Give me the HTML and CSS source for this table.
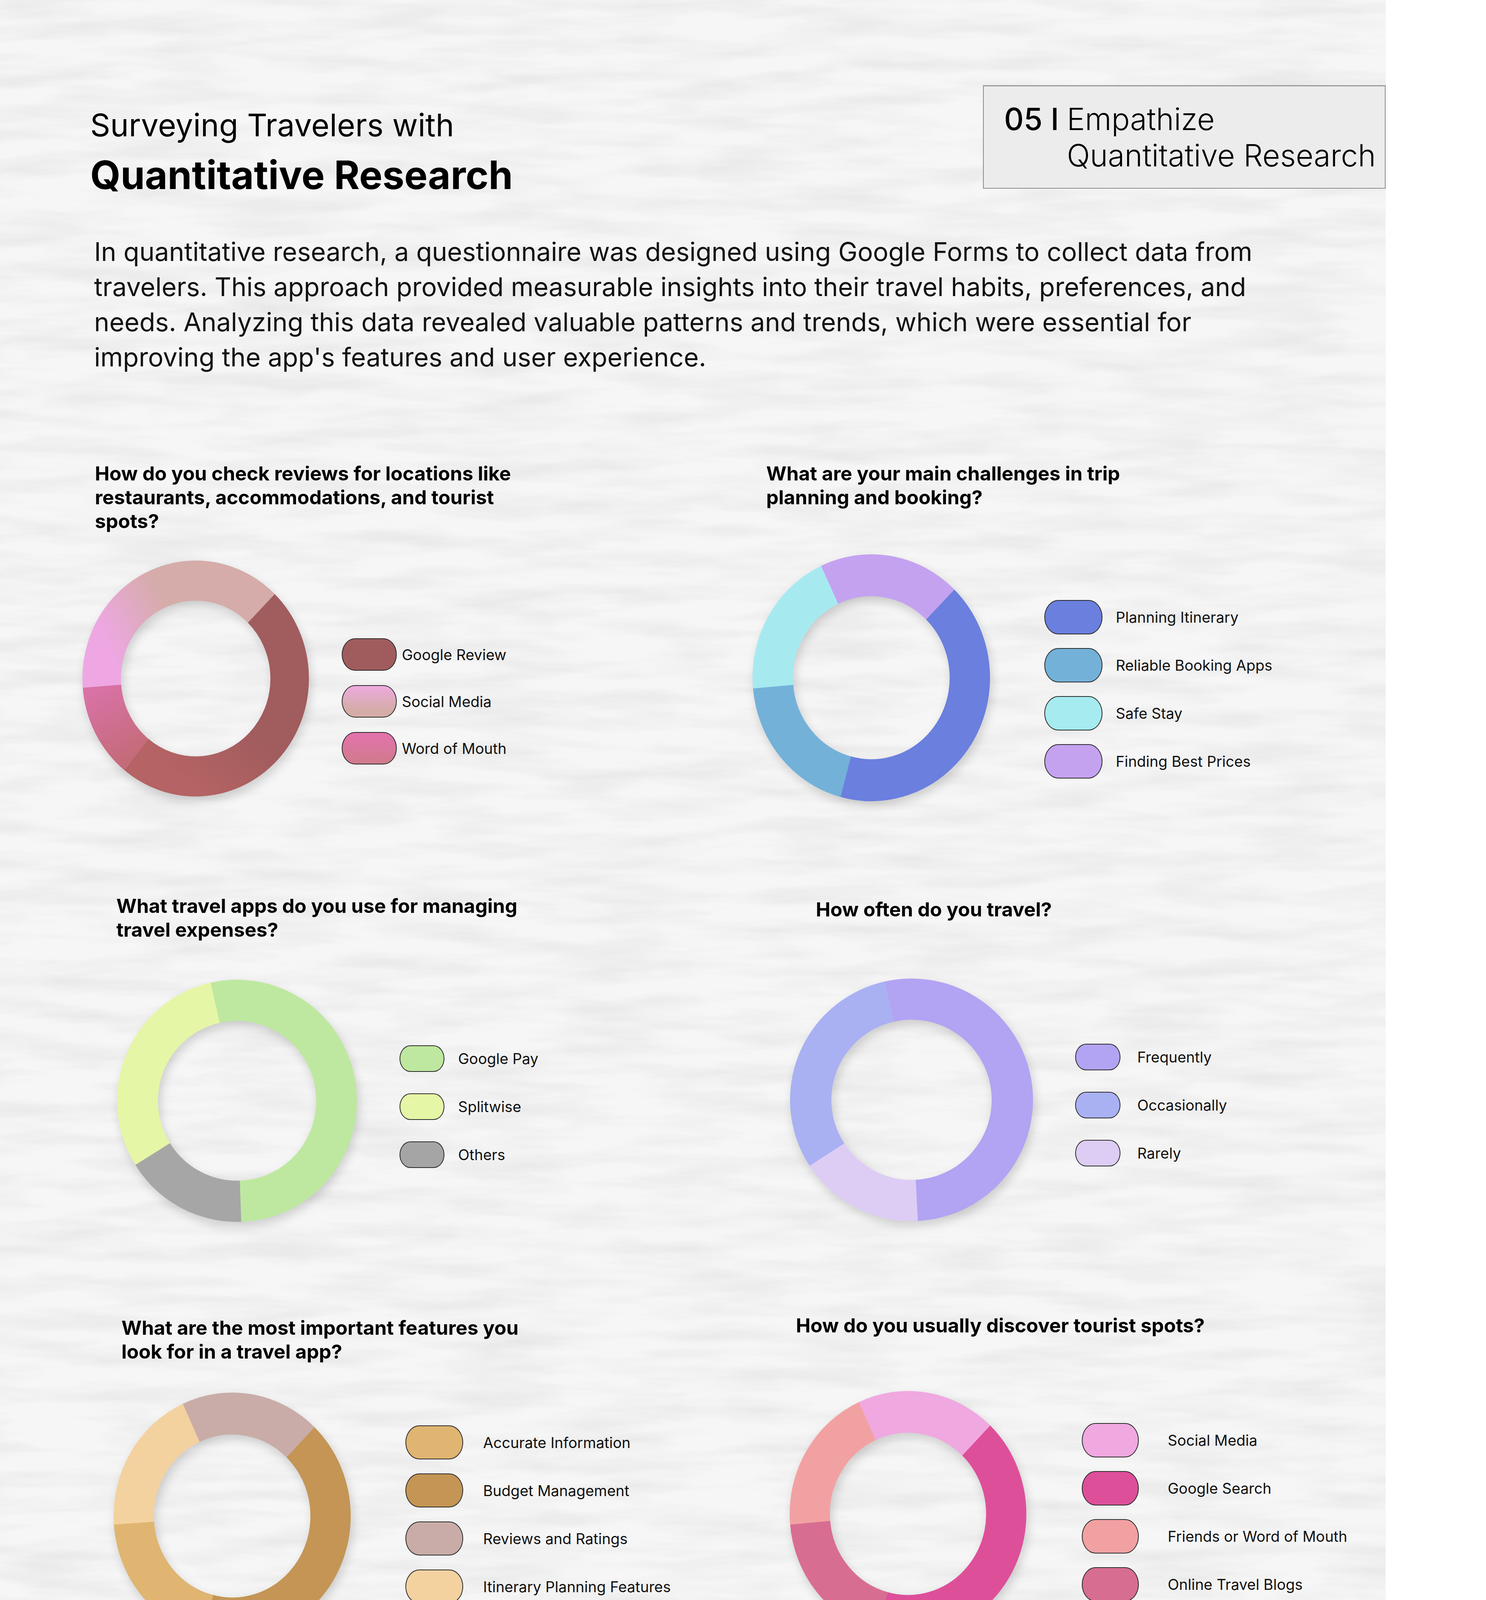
FILE: index.html
```html
<!DOCTYPE html>
<html lang="en">
<head>
<meta charset="utf-8">
<title>Surveying Travelers with Quantitative Research</title>
<link rel="stylesheet" href="styles.css">
</head>
<body>
<div class="page">
  <main class="paper">
    <svg class="grain" aria-hidden="true" xmlns="http://www.w3.org/2000/svg">
      <filter id="paperGrain" x="0" y="0" width="100%" height="100%">
        <feTurbulence type="fractalNoise" baseFrequency="0.0035 0.022" numOctaves="4" seed="11"/>
        <feColorMatrix type="matrix" values="0 0 0 0 0.6  0 0 0 0 0.6  0 0 0 0 0.6  0.6 0 0 0 -0.22"/>
      </filter>
      <rect width="100%" height="100%" filter="url(#paperGrain)"/>
    </svg>

    <div class="content">
      <header class="top">
        <h1 class="heading">
          <span class="kicker">Surveying Travelers with</span>
          <span class="title">Quantitative Research</span>
        </h1>
        <div class="tag">
          <span class="tag-num">05 I</span>
          <span class="tag-text">Empathize<br>Quantitative Research</span>
        </div>
      </header>

      <p class="intro">In quantitative research, a questionnaire was designed using Google Forms to collect data from<br>travelers. This approach provided measurable insights into their travel habits, preferences, and<br>needs. Analyzing this data revealed valuable patterns and trends, which were essential for<br>improving the app's features and user experience.</p>

      <div class="charts">
        <section class="chart c1">
          <h2 class="q">How do you check reviews for locations like<br>restaurants, accommodations, and tourist<br>spots?</h2>
          <div class="body">
            <svg class="donut" viewBox="0 0 200 200" preserveAspectRatio="none">
              <defs>
                <linearGradient id="gReview" x1="1" y1="0.5" x2="0" y2="0.54">
                  <stop offset="0.5" stop-color="#a15c5d"/>
                  <stop offset="0.92" stop-color="#b56364"/>
                </linearGradient>
                <linearGradient id="gMouth" x1="1" y1="0.5" x2="0.84" y2="0.86">
                  <stop offset="0" stop-color="#c46b79"/>
                  <stop offset="1" stop-color="#d972a6"/>
                </linearGradient>
                <linearGradient id="gSocial" x1="1" y1="0.5" x2="0.13" y2="0.83">
                  <stop offset="0.12" stop-color="#eea7e3"/>
                  <stop offset="0.52" stop-color="#d5aca9"/>
                </linearGradient>
              </defs>
              <circle class="seg" cx="100" cy="100" r="83" pathLength="100" stroke="url(#gReview)" stroke-dasharray="48.8 100" transform="rotate(-46 100 100)"/>
              <circle class="seg" cx="100" cy="100" r="83" pathLength="100" stroke="url(#gMouth)" stroke-dasharray="13.1 100" transform="rotate(129 100 100)"/>
              <circle class="seg" cx="100" cy="100" r="83" pathLength="100" stroke="url(#gSocial)" stroke-dasharray="38.6 100" transform="rotate(175.5 100 100)"/>
            </svg>
            <ul class="legend">
              <li><span class="sw k-review"></span>Google Review</li>
              <li><span class="sw k-social1"></span>Social Media</li>
              <li><span class="sw k-mouth1"></span>Word of Mouth</li>
            </ul>
          </div>
        </section>

        <section class="chart c2">
          <h2 class="q">What are your main challenges in trip<br>planning and booking?</h2>
          <div class="body">
            <svg class="donut" viewBox="0 0 200 200" preserveAspectRatio="none">
              <circle class="seg" cx="100" cy="100" r="83" pathLength="100" stroke="#6a7fde" stroke-dasharray="42.1 100" transform="rotate(-46 100 100)"/>
              <circle class="seg" cx="100" cy="100" r="83" pathLength="100" stroke="#73b1d9" stroke-dasharray="19.6 100" transform="rotate(105 100 100)"/>
              <circle class="seg" cx="100" cy="100" r="83" pathLength="100" stroke="#a6eaf0" stroke-dasharray="19.6 100" transform="rotate(175 100 100)"/>
              <circle class="seg" cx="100" cy="100" r="83" pathLength="100" stroke="#c4a2f0" stroke-dasharray="19.3 100" transform="rotate(245 100 100)"/>
            </svg>
            <ul class="legend">
              <li><span class="sw k-plan"></span>Planning Itinerary</li>
              <li><span class="sw k-booking"></span>Reliable Booking Apps</li>
              <li><span class="sw k-safe"></span>Safe Stay</li>
              <li><span class="sw k-prices"></span>Finding Best Prices</li>
            </ul>
          </div>
        </section>

        <section class="chart c3">
          <h2 class="q">What travel apps do you use for managing<br>travel expenses?</h2>
          <div class="body">
            <svg class="donut" viewBox="0 0 200 200" preserveAspectRatio="none">
              <circle class="seg" cx="100" cy="100" r="83" pathLength="100" stroke="#bee89f" stroke-dasharray="53.2 100" transform="rotate(257 100 100)"/>
              <circle class="seg" cx="100" cy="100" r="83" pathLength="100" stroke="#a6a6a6" stroke-dasharray="16.8 100" transform="rotate(88 100 100)"/>
              <circle class="seg" cx="100" cy="100" r="83" pathLength="100" stroke="#e5f6a6" stroke-dasharray="30.4 100" transform="rotate(148 100 100)"/>
            </svg>
            <ul class="legend">
              <li><span class="sw k-gpay"></span>Google Pay</li>
              <li><span class="sw k-split"></span>Splitwise</li>
              <li><span class="sw k-others"></span>Others</li>
            </ul>
          </div>
        </section>

        <section class="chart c4">
          <h2 class="q">How often do you travel?</h2>
          <div class="body">
            <svg class="donut" viewBox="0 0 200 200" preserveAspectRatio="none">
              <circle class="seg" cx="100" cy="100" r="83" pathLength="100" stroke="#b3a3f3" stroke-dasharray="52.9 100" transform="rotate(257 100 100)"/>
              <circle class="seg" cx="100" cy="100" r="83" pathLength="100" stroke="#ddcdf4" stroke-dasharray="16.8 100" transform="rotate(87 100 100)"/>
              <circle class="seg" cx="100" cy="100" r="83" pathLength="100" stroke="#a9b1f3" stroke-dasharray="30.7 100" transform="rotate(147 100 100)"/>
            </svg>
            <ul class="legend">
              <li><span class="sw k-freq"></span>Frequently</li>
              <li><span class="sw k-occ"></span>Occasionally</li>
              <li><span class="sw k-rare"></span>Rarely</li>
            </ul>
          </div>
        </section>

        <section class="chart c5">
          <h2 class="q">What are the most important features you<br>look for in a travel app?</h2>
          <div class="body">
            <svg class="donut" viewBox="0 0 200 200" preserveAspectRatio="none">
              <circle class="seg" cx="100" cy="100" r="83" pathLength="100" stroke="#c9aca7" stroke-dasharray="19.3 100" transform="rotate(245 100 100)"/>
              <circle class="seg" cx="100" cy="100" r="83" pathLength="100" stroke="#c49554" stroke-dasharray="41.8 100" transform="rotate(-46 100 100)"/>
              <circle class="seg" cx="100" cy="100" r="83" pathLength="100" stroke="#dfb571" stroke-dasharray="20.2 100" transform="rotate(104 100 100)"/>
              <circle class="seg" cx="100" cy="100" r="83" pathLength="100" stroke="#f3d2a0" stroke-dasharray="19.3 100" transform="rotate(176 100 100)"/>
            </svg>
            <ul class="legend">
              <li><span class="sw k-accurate"></span>Accurate Information</li>
              <li><span class="sw k-budget"></span>Budget Management</li>
              <li><span class="sw k-ratings"></span>Reviews and Ratings</li>
              <li><span class="sw k-itinerary"></span>Itinerary Planning Features</li>
            </ul>
          </div>
        </section>

        <section class="chart c6">
          <h2 class="q">How do you usually discover tourist spots?</h2>
          <div class="body">
            <svg class="donut" viewBox="0 0 200 200" preserveAspectRatio="none">
              <circle class="seg" cx="100" cy="100" r="83" pathLength="100" stroke="#f0a8e0" stroke-dasharray="19.3 100" transform="rotate(245 100 100)"/>
              <circle class="seg" cx="100" cy="100" r="83" pathLength="100" stroke="#de4f9a" stroke-dasharray="42.1 100" transform="rotate(-46 100 100)"/>
              <circle class="seg" cx="100" cy="100" r="83" pathLength="100" stroke="#d86d92" stroke-dasharray="19.6 100" transform="rotate(105 100 100)"/>
              <circle class="seg" cx="100" cy="100" r="83" pathLength="100" stroke="#f2a1a3" stroke-dasharray="19.6 100" transform="rotate(175 100 100)"/>
            </svg>
            <ul class="legend">
              <li><span class="sw k-social2"></span>Social Media</li>
              <li><span class="sw k-gsearch"></span>Google Search</li>
              <li><span class="sw k-friends"></span>Friends or Word of Mouth</li>
              <li><span class="sw k-blogs"></span>Online Travel Blogs</li>
            </ul>
          </div>
        </section>
      </div>
    </div>
  </main>
</div>
</body>
</html>
```

FILE: styles.css
```css
* { box-sizing: border-box; }

body {
  margin: 0;
  background: #ffffff;
  font-family: Inter, "Noto Sans", "Liberation Sans", sans-serif;
  color: #000;
}

.page {
  width: 3805px;
  height: 4650px;
  overflow: hidden;
}

.paper {
  position: relative;
  width: 3548px;
  height: 4650px;
  background: #f6f6f6;
  overflow: hidden;
}

.grain {
  position: absolute;
  inset: 0;
  width: 100%;
  height: 100%;
  display: block;
}

.content {
  position: relative;
}

/* ---------- header ---------- */
.top {
  display: flex;
  justify-content: space-between;
  align-items: flex-start;
  padding-top: 218px;
}

.heading {
  margin: 55px 0 0 231px;
  font-weight: 400;
}

.kicker {
  display: block;
  font-size: 80px;
  line-height: 94px;
  font-weight: 400;
}

.title {
  display: block;
  margin-top: 24px;
  font-size: 100px;
  line-height: 114px;
  font-weight: 700;
}

.tag {
  display: flex;
  align-items: flex-start;
  gap: 20px;
  width: 1031px;
  height: 265px;
  padding: 37px 0 0 52px;
  background: #ececec;
  border: 2px solid #8c8c8c;
  border-top: 3px solid #9a9a9a;
  font-size: 78px;
  line-height: 93px;
  color: #000;
}

.tag-num { font-weight: 500; }
.tag-text { font-weight: 300; }

.intro {
  margin: 94px 0 0 241px;
  font-size: 66px;
  line-height: 90px;
  font-weight: 400;
  color: #111;
  white-space: nowrap;
}

/* ---------- charts ---------- */
.charts {
  display: grid;
  grid-template-columns: 1900px 1648px;
  grid-template-rows: 1107px 1074px auto;
  margin-top: 223px;
}

.chart {
  padding: var(--pt, 0px) 0 0 var(--tx);
}

.q {
  margin: 0;
  font-size: 50px;
  line-height: 61px;
  font-weight: 700;
  white-space: nowrap;
}

.body {
  display: flex;
  align-items: flex-start;
  margin: var(--bt) 0 0 var(--bx);
}

.donut {
  display: block;
  flex: none;
  width: var(--dw);
  height: var(--dh);
  overflow: visible;
  filter: drop-shadow(5px 12px 12px rgba(0, 0, 0, 0.16));
}

.seg {
  fill: none;
  stroke-width: 34;
}

.legend {
  list-style: none;
  margin: var(--ly) 0 0 var(--lx);
  padding: 0;
  display: flex;
  flex-direction: column;
  gap: var(--sg);
}

.legend li {
  display: flex;
  align-items: center;
  gap: var(--tg);
  height: var(--sh);
  font-size: 38px;
  color: #111;
  white-space: nowrap;
}

.sw {
  flex: none;
  width: var(--sw);
  height: var(--sh);
  border: 2px solid #2a2a2a;
  border-radius: 24% / 50%;
}

/* per-chart geometry */
.c1 { --tx: 243px; --bt: 70px;  --bx: -32px; --dw: 580px; --dh: 604px; --lx: 84px;  --ly: 199px; --sw: 141px; --sh: 83px; --sg: 37px; --tg: 13px; }
.c2 { --tx: 62px;  --bt: 115px; --bx: -35px; --dw: 608px; --dh: 632px; --lx: 139px; --ly: 117px; --sw: 149px; --sh: 88px; --sg: 35px; --tg: 34px; }
.c3 { --tx: 298px; --bt: 97px;  --bx: 2px;   --dw: 614px; --dh: 620px; --lx: 109px; --ly: 168px; --sw: 115px; --sh: 68px; --sg: 55px; --tg: 35px; }
.c4 { --tx: 189px; --pt: 9px; --bt: 146px; --bx: -66px; --dw: 622px; --dh: 621px; --lx: 108px; --ly: 167px; --sw: 116px; --sh: 68px; --sg: 55px; --tg: 43px; }
.c5 { --tx: 311px; --pt: 6px; --bt: 74px;  --bx: -20px; --dw: 607px; --dh: 632px; --lx: 140px; --ly: 84px;  --sw: 148px; --sh: 87px; --sg: 36px; --tg: 51px; }
.c6 { --tx: 138px; --bt: 137px; --bx: -16px; --dw: 606px; --dh: 629px; --lx: 142px; --ly: 82px;  --sw: 146px; --sh: 88px; --sg: 35px; --tg: 74px; }

/* legend swatch colours */
.k-review   { background: #a05c5c; }
.k-social1  { background: linear-gradient(180deg, #eeaae0 0%, #d4aca8 75%); }
.k-mouth1   { background: linear-gradient(180deg, #e472ad 0%, #cf7b8c 100%); }

.k-plan     { background: #6a7fde; }
.k-booking  { background: #73b1d9; }
.k-safe     { background: #a6ebf0; }
.k-prices   { background: #c4a2f0; }

.k-gpay     { background: #bee89f; }
.k-split    { background: #e5f6a6; }
.k-others   { background: #a5a5a5; }

.k-freq     { background: #b3a3f3; }
.k-occ      { background: #a9b1f3; }
.k-rare     { background: #ddcdf4; }

.k-accurate { background: #dfb571; }
.k-budget   { background: #c49554; }
.k-ratings  { background: #c9aca7; }
.k-itinerary{ background: #f3d2a0; }

.k-social2  { background: #f0a8e0; }
.k-gsearch  { background: #de4f9a; }
.k-friends  { background: #f2a1a3; }
.k-blogs    { background: #d86d92; }
```
